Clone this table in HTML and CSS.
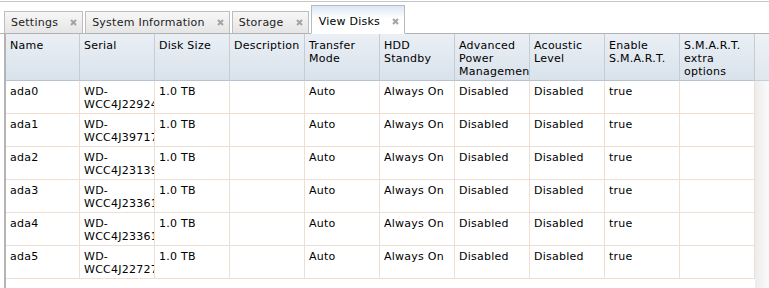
FILE: index.html
```html
<!DOCTYPE html>
<html lang="en">
<head>
    <meta charset="UTF-8">
    <title>View Disks</title>
    <link rel="stylesheet" href="styles.css">
</head>
<body>
    <div class="panel">
        <div class="tabs">
            <div class="tab"><span class="tab-label">Settings</span><svg class="tab-close" viewBox="0 0 7 7"><path d="M1 1L6 6M6 1L1 6"/></svg></div>
            <div class="tab"><span class="tab-label">System Information</span><svg class="tab-close" viewBox="0 0 7 7"><path d="M1 1L6 6M6 1L1 6"/></svg></div>
            <div class="tab"><span class="tab-label">Storage</span><svg class="tab-close" viewBox="0 0 7 7"><path d="M1 1L6 6M6 1L1 6"/></svg></div>
            <div class="tab active"><span class="tab-label">View Disks</span><svg class="tab-close" viewBox="0 0 7 7"><path d="M1 1L6 6M6 1L1 6"/></svg></div>
        </div>

        <div class="grid">
            <table class="disk-table">
                <thead>
                    <tr>
                        <th>Name</th>
                        <th>Serial</th>
                        <th>Disk Size</th>
                        <th>Description</th>
                        <th>Transfer Mode</th>
                        <th>HDD Standby</th>
                        <th>Advanced Power Management</th>
                        <th>Acoustic Level</th>
                        <th>Enable S.M.A.R.T.</th>
                        <th>S.M.A.R.T. extra options</th>
                    </tr>
                </thead>
                <tbody id="diskRows"></tbody>
            </table>
            <div class="gutter">
                <div class="gutter-head"></div>
            </div>
        </div>
    </div>

    <script>
        const disks = [
            { name: 'ada0', serial: 'WD-WCC4J2292415' },
            { name: 'ada1', serial: 'WD-WCC4J3971768' },
            { name: 'ada2', serial: 'WD-WCC4J2313925' },
            { name: 'ada3', serial: 'WD-WCC4J2336107' },
            { name: 'ada4', serial: 'WD-WCC4J2336142' },
            { name: 'ada5', serial: 'WD-WCC4J2272790' }
        ];

        function renderDisks() {
            const body = document.getElementById('diskRows');
            body.innerHTML = disks.map(disk => `
                <tr>
                    <td>${disk.name}</td>
                    <td>${disk.serial}</td>
                    <td>1.0 TB</td>
                    <td></td>
                    <td>Auto</td>
                    <td>Always On</td>
                    <td>Disabled</td>
                    <td>Disabled</td>
                    <td>true</td>
                    <td></td>
                </tr>`).join('');
        }

        renderDisks();
    </script>
</body>
</html>
```

FILE: styles.css
```css
* {
    margin: 0;
    padding: 0;
    box-sizing: border-box;
}

body {
    font-family: 'DejaVu Sans', Verdana, sans-serif;
    font-size: 11px;
    line-height: 13px;
    letter-spacing: 0.25px;
    color: #000;
    background: white;
}

.panel {
    margin-top: 1px;
    border-top: 1px solid #c6c6c6;
    min-height: calc(100vh - 1px);
    display: flex;
    flex-direction: column;
}

/* tab strip */
.tabs {
    height: 32px;
    padding-left: 4px;
    display: flex;
    align-items: flex-end;
    gap: 2px;
    border-bottom: 1px solid #b2b2b2;
}

.tab {
    height: 23px;
    margin-bottom: -1px;
    padding: 0 5px 0 6px;
    display: flex;
    align-items: center;
    border: 1px solid #bdbdbd;
    border-bottom-color: #b2b2b2;
    background: linear-gradient(#f7f7f7, #e5e5e5);
    color: #222;
}

.tab.active {
    height: 29px;
    padding-left: 7px;
    border-color: #b6bcc4;
    border-bottom-color: white;
    background: linear-gradient(#dce7f4 0%, #ffffff 45%);
    color: #000;
}

.tab-label {
    margin-right: 12px;
}

.tab.active .tab-label {
    padding-top: 4px;
}

.tab-close {
    width: 7px;
    height: 7px;
    stroke: #a3a3a3;
    stroke-width: 2;
    fill: none;
}

.tab.active .tab-close {
    margin-top: 4px;
}

/* disk grid */
.grid {
    flex: 1;
    display: flex;
    margin-left: 4px;
    border-left: 2px solid #b4b4b4;
}

.disk-table {
    width: 749px;
    table-layout: fixed;
    border-collapse: separate;
    border-spacing: 0;
    align-self: flex-start;
}

.disk-table th,
.disk-table td {
    width: 75px;
    overflow: hidden;
    text-align: left;
    vertical-align: top;
}

.disk-table th:first-child,
.disk-table td:first-child {
    width: 74px;
}

.disk-table th {
    height: 47px;
    padding: 5px 3px 2px 4px;
    font-weight: normal;
    background: linear-gradient(#eaeff5, #d9e2eb);
    border-right: 1px solid #c4ccd6;
    border-bottom: 1px solid #b9c3cd;
}

.disk-table td {
    height: 33px;
    padding: 4px 3px 2px 4px;
    border-right: 1px solid #efdfd2;
    border-bottom: 1px solid #efdfd2;
}

.gutter {
    flex: 1;
    background: linear-gradient(to right, #ececec, #fbfbfb);
}

.gutter-head {
    height: 47px;
    background: linear-gradient(#eef2f6, #e0e7ee);
    border-bottom: 1px solid #c7cfd8;
}
```
